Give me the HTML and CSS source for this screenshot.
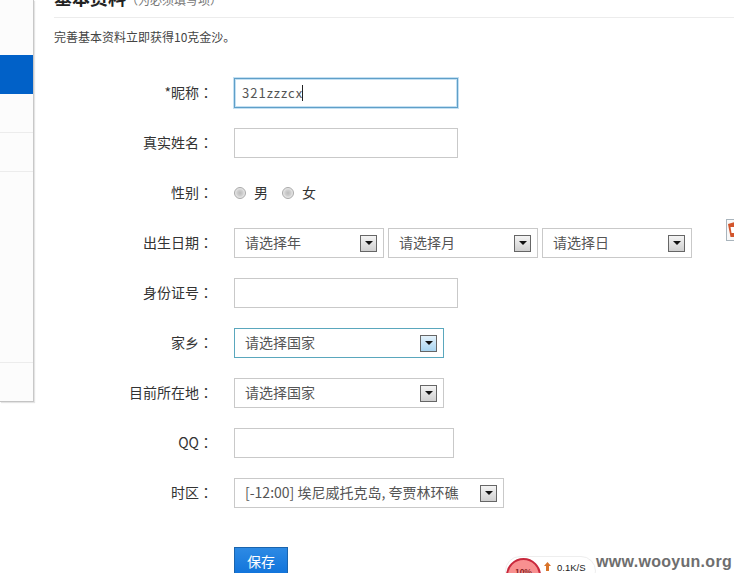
FILE: index.html
```html
<!DOCTYPE html>
<html lang="zh-CN">
<head>
<meta charset="utf-8">
<title>基本资料</title>
<link rel="stylesheet" href="styles.css">
</head>
<body>
<div class="page">
  <aside class="sidebar">
    <div class="side-item side-first"></div>
    <div class="side-item side-active"></div>
    <div class="side-item side-plain"></div>
    <div class="side-item side-plain"></div>
    <div class="side-item side-tall"></div>
    <div class="side-item side-last"></div>
  </aside>
  <main class="content">
    <h1 class="title">基本资料<span class="title-note">（为必须填写项）</span></h1>
    <p class="intro">完善基本资料立即获得10克金沙。</p>
    <form class="form">
      <div class="row"><label class="label">*昵称<span class="colon" lang="zh-TW">：</span></label><div class="field input focus w224"><span>321zzzcx</span><i class="caret"></i></div></div>
      <div class="row"><label class="label">真实姓名<span class="colon" lang="zh-TW">：</span></label><div class="field input w224"></div></div>
      <div class="row"><label class="label">性别<span class="colon" lang="zh-TW">：</span></label>
        <div class="radios"><i class="radio"></i><span>男</span><i class="radio radio-second"></i><span>女</span></div>
      </div>
      <div class="row"><label class="label">出生日期<span class="colon" lang="zh-TW">：</span></label>
        <div class="selects">
          <div class="field select w150"><span>请选择年</span><b class="arrow"><i></i></b></div>
          <div class="field select w150"><span>请选择月</span><b class="arrow"><i></i></b></div>
          <div class="field select w150"><span>请选择日</span><b class="arrow"><i></i></b></div>
        </div>
      </div>
      <div class="row"><label class="label">身份证号<span class="colon" lang="zh-TW">：</span></label><div class="field input w224"></div></div>
      <div class="row"><label class="label">家乡<span class="colon" lang="zh-TW">：</span></label><div class="field select hot w210"><span>请选择国家</span><b class="arrow"><i></i></b></div></div>
      <div class="row"><label class="label">目前所在地<span class="colon" lang="zh-TW">：</span></label><div class="field select w210"><span>请选择国家</span><b class="arrow"><i></i></b></div></div>
      <div class="row"><label class="label">QQ<span class="colon" lang="zh-TW">：</span></label><div class="field input w220"></div></div>
      <div class="row"><label class="label">时区<span class="colon" lang="zh-TW">：</span></label><div class="field select w270"><span>[-12:00] 埃尼威托克岛, 夸贾林环礁</span><b class="arrow"><i></i></b></div></div>
      <div class="actions"><button class="save" type="button">保存</button></div>
    </form>
  </main>
</div>
<div class="side-icon"><svg width="8" height="18" viewBox="0 0 8 18"><path d="M1 3 L8 1 V16 H3.500 Z" fill="#d2552c"/><path d="M3.500 6 H8 V12 H4.500 Z" fill="#fff"/></svg></div>
<div class="speed">
  <div class="speed-ball"><span>10%</span></div>
  <svg class="speed-up" width="7" height="9" viewBox="0 0 7 9"><path d="M3.500 0 L7 4 H5 V9 H2 V4 H0 Z" fill="#d9742a"/></svg>
  <span class="speed-text">0.1K/S</span>
</div>
<div class="watermark">www.wooyun.org</div>
</body>
</html>
```
FILE: styles.css
```css
* { box-sizing: border-box; }
html, body { margin: 0; padding: 0; height: 573px; overflow: hidden; background: #fff; }
body { font-family: "Noto Sans CJK SC", "Liberation Sans", sans-serif; color: #333; font-size: 14px; position: relative; }
.page { display: flex; align-items: flex-start; width: 734px; height: 573px; overflow: hidden; }

.sidebar { width: 34px; height: 402px; flex: none; background: #fcfcfc; border-right: 1px solid #c8c8c8; border-bottom: 1px solid #c4c4c4; box-shadow: 1px 1px 1px #e4e4e4; display: flex; flex-direction: column; }
.side-item { flex: none; }
.side-first { height: 55px; }
.side-active { height: 39px; background: #0161c8; }
.side-plain { height: 39px; border-bottom: 1px solid #ececec; }
.side-tall { height: 191px; border-bottom: 1px solid #ececec; }
.side-last { flex: 1; }

.content { margin-left: 20px; flex: 1; min-width: 0; }
.title { margin: -15px 0 0; height: 33px; line-height: 24px; font-size: 18px; font-weight: 700; color: #222; border-bottom: 1px solid #ececec; white-space: nowrap; }
.title-note { font-size: 12px; font-weight: 400; color: #777; }
.intro { margin: 11px 0 0; font-size: 12px; line-height: 16px; color: #444; }

.form { margin-top: 33px; }
.row { display: flex; align-items: center; height: 30px; margin-bottom: 20px; }
.label { width: 159px; margin-right: 21px; padding-bottom: 2px; text-align: right; font-size: 14px; color: #333; flex: none; white-space: nowrap; }
.colon { font-family: "Noto Sans CJK TC", sans-serif; }

.field { height: 30px; border: 1px solid #c9c9c9; background: #fff; display: flex; align-items: center; color: #555; font-size: 14px; white-space: nowrap; flex: none; }
.field span { padding-bottom: 2px; }
.input { padding-left: 7px; }
.select { padding-left: 10px; justify-content: space-between; padding-right: 6px; }
.w150 { width: 150px; }
.w210 { width: 210px; }
.w220 { width: 220px; }
.w224 { width: 224px; }
.w270 { width: 270px; }

.focus { border: 1px solid #5f9fc8; box-shadow: 0 0 0 1px #c4e0f2, inset 0 0 0 1px #c4e0f2; font-size: 13px; letter-spacing: 1px; }
.caret { display: inline-block; width: 1px; height: 16px; background: #222; margin-left: -1px; }
.hot { border-color: #5aa7bd; }

.selects { display: flex; gap: 4px; }
.arrow { width: 17px; height: 17px; flex: none; border: 1px solid #666; background: linear-gradient(#f4f4f4, #cfcfcf); display: flex; align-items: center; justify-content: center; }
.arrow i { width: 0; height: 0; border-left: 4px solid transparent; border-right: 4px solid transparent; border-top: 4px solid #111; }
.hot .arrow { background: linear-gradient(#e4f2fb, #a8d4f0); }

.radios { display: flex; align-items: center; font-size: 14px; color: #333; }
.radios span { padding-bottom: 2px; }
.radio { width: 12px; height: 12px; border-radius: 50%; border: 1px solid #a8a8a8; background: radial-gradient(circle at 50% 50%, #bcbcbc 0, #cfcfcf 40%, #f2f2f2 80%); margin: 0 8px 0 0; flex: none; }
.radio-second { margin-left: 14px; }

.actions { margin: 39px 0 0 180px; }
.save { width: 54px; height: 30px; padding: 0 0 2px; border: 1px solid #1a64ad; background: linear-gradient(#2d8ae4, #0f72da); color: #fff; font: 14px "Noto Sans CJK SC", sans-serif; }

.side-icon { position: absolute; left: 726px; top: 219px; width: 8px; height: 22px; border: 1px solid #a9b4bc; border-right: 0; background: #f8f8f8; overflow: hidden; }
.side-icon svg { display: block; margin-top: 1px; }

.speed { position: absolute; left: 505px; top: 556px; width: 91px; height: 30px; border-radius: 15px; background: #fff; border: 1px solid #eee; }
.speed-ball { position: absolute; left: 0; top: 1px; width: 35px; height: 35px; border-radius: 50%; background: #f89090; border: 2px solid #c8283c; text-align: center; font-size: 8px; line-height: 24px; font-weight: 700; color: #822; }
.speed-up { position: absolute; left: 38px; top: 5px; }
.speed-text { position: absolute; left: 51px; top: 5px; font: 9.500px/12px "Liberation Sans", sans-serif; color: #222; }

.watermark { position: absolute; left: 596px; top: 553px; font: 700 16px/18px "Liberation Sans", sans-serif; color: #6e6e6e; letter-spacing: 0.300px; white-space: nowrap; }
```
